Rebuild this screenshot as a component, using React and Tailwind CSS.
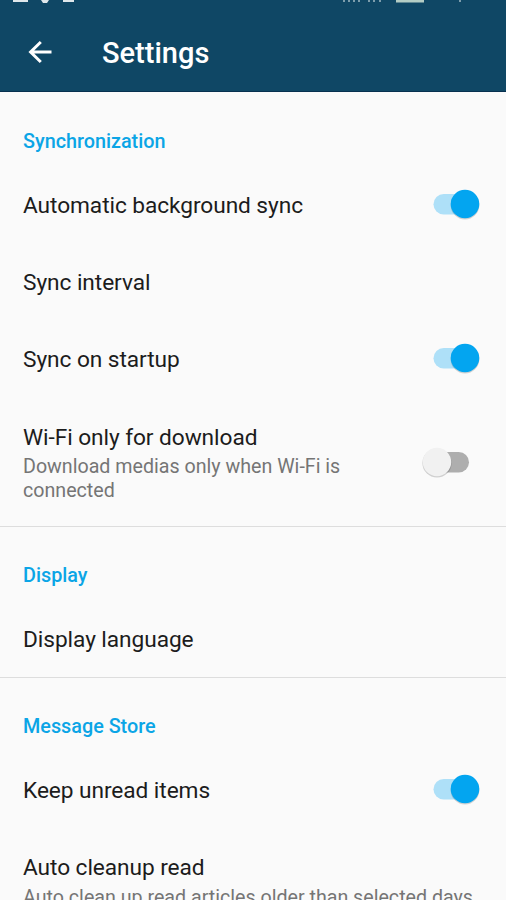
function Switch({ on }) {
  return on ? (
    <svg className="mb-[4px] ml-auto shrink-0" width="60" height="40" viewBox="0 0 60 40">
      <rect x="9.5" y="10" width="37" height="20.5" rx="10.25" fill="#aee0f8" />
      <circle cx="41" cy="21.2" r="14.3" fill="#000" opacity=".16" />
      <circle cx="41" cy="20" r="14.3" fill="#03a5f0" />
    </svg>
  ) : (
    <svg className="mb-[3px] ml-auto shrink-0 overflow-visible" width="60" height="40" viewBox="0 0 60 40">
      <rect x="8" y="10" width="37" height="20.5" rx="10.25" fill="#aeaeae" />
      <circle cx="13" cy="21" r="14.6" fill="#000" opacity=".17" />
      <circle cx="13" cy="20" r="14.2" fill="#f1f1f1" />
    </svg>
  );
}

function Row({ title, children, on, className }) {
  return (
    <div className={"flex items-center pl-[23px] pr-[22px] " + className}>
      <div>
        <div className="text-[22.7px] leading-[28px] tracking-[-0.07px] whitespace-nowrap">{title}</div>
        {children}
      </div>
      {on !== undefined && <Switch on={on} />}
    </div>
  );
}

function Header({ children }) {
  return <h2 className="pl-[23px] text-[19.8px] leading-6 font-medium text-[#0ba5e6]">{children}</h2>;
}

export default function App() {
  return (
    <div className="h-[900px] w-[506px] overflow-hidden bg-[#fafafa] font-[Roboto,sans-serif] text-[#1c1c1c]">
      <header className="relative flex h-[92px] items-center border-b border-[#07304f] bg-[#0f4765] text-white">
        <svg className="absolute left-0 top-0" width="506" height="4">
          <path d="M13 0h15v2H13zM41 0h8l-2 3h-4zM63 0h11v2H63z" fill="#dfe7eb" />
          <path d="M343 0h2v2h-2zM348 0h2v2h-2zM353 0h2v2h-2zM358 0h2v2h-2zM368 0h2v2h-2zM373 0h2v2h-2zM379 0h2v2h-2zM459 0h2v2h-2z" fill="#7d9dac" />
          <path d="M396 0h28v2.5h-28z" fill="#b4cdc5" />
        </svg>
        <svg className="mt-[13px] ml-[28px]" width="24" height="24" viewBox="0 0 24 24" fill="none" stroke="white" strokeWidth="3">
          <path d="M23.5 12H3M12.8 2L2.6 12l10.2 10" />
        </svg>
        <h1 className="mt-[14px] ml-[50px] text-[29px] leading-8 font-medium">Settings</h1>
      </header>
      <section className="h-[435px] border-b border-[#dddddd] pt-[38px]">
        <Header>Synchronization</Header>
        <Row title="Automatic background sync" on={true} className="mt-[13px] h-[78px]" />
        <Row title="Sync interval" className="h-[76px]" />
        <Row title="Sync on startup" on={true} className="h-[78px]" />
        <Row title="Wi-Fi only for download" on={false} className="h-[129px]">
          <p className="mt-[3px] w-[345px] text-[19.65px] leading-[24px] text-[#757575]">Download medias only when Wi-Fi is connected</p>
        </Row>
      </section>
      <section className="h-[151px] border-b border-[#dddddd] pt-[37px]">
        <Header>Display</Header>
        <Row title="Display language" className="mt-[13px] h-[77px]" />
      </section>
      <section className="pt-[37px]">
        <Header>Message Store</Header>
        <Row title="Keep unread items" on={true} className="mt-[13px] h-[78px]" />
        <Row title="Auto cleanup read" className="mt-[24px]">
          <p className="text-[19.65px] leading-[31px] whitespace-nowrap text-[#757575]">Auto clean up read articles older than selected days</p>
        </Row>
      </section>
    </div>
  );
}
